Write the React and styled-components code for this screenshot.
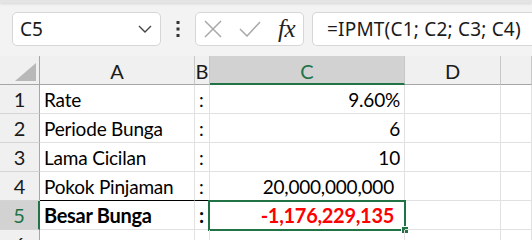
import React from "react";
import styled, { createGlobalStyle } from "styled-components";

const GREEN = "#217346";

const GlobalStyle = createGlobalStyle`
  html, body {
    margin: 0;
    padding: 0;
    background: #fff;
  }
`;

const Window = styled.div`
  width: 532px;
  height: 240px;
  overflow: hidden;
  background: #f3f3f3;
  font-family: "Lato", "Noto Sans", sans-serif;
`;

const RibbonEdge = styled.div`
  height: 3px;
  background: #e4e4e4;
  box-shadow: 0 1px 3px rgba(0, 0, 0, 0.12);
`;

const FormulaBar = styled.div`
  display: flex;
  align-items: center;
  height: 34px;
  padding: 9px 0 0 12px;
  font-family: "Noto Sans", "Open Sans", sans-serif;
`;

const Box = styled.div`
  box-sizing: border-box;
  height: 34px;
  background: #fff;
  border: 1px solid #d6d6d6;
  display: flex;
  align-items: center;
  width: ${p => p.$w || "auto"};
  flex: ${p => (p.$grow ? 1 : "none")};
  padding: ${p => p.$pad || "0"};
  border-right: ${p => (p.$open ? "none" : "1px solid #d6d6d6")};
  border-radius: ${p => (p.$open ? "5px 0 0 5px" : "5px")};
`;

const NameText = styled.span`
  flex: 1;
  font-size: 19px;
  color: #1a1a1a;
`;

const Dots = styled.div`
  width: ${p => p.$w || "34px"};
  display: flex;
  justify-content: center;
`;

const FxText = styled.span`
  font-family: "Liberation Serif", "DejaVu Serif", serif;
  font-style: italic;
  font-size: 25px;
  color: #222;
  margin-left: auto;
  letter-spacing: -0.5px;
`;

const FormulaText = styled.span`
  font-size: 19px;
  color: #1a1a1a;
  white-space: nowrap;
  letter-spacing: 0.2px;
`;

const Grid = styled.div`
  margin-top: 10px;
  display: grid;
  grid-template-columns: 40px 155px 15px 195px 96px 1fr;
  grid-auto-rows: 29px;
  background: #fff;
`;

const ColHead = styled.div`
  box-sizing: border-box;
  background: ${p => (p.$sel ? "#d2d2d2" : "#f0f0f0")};
  border-right: 1px solid ${p => (p.$sel ? "#c6c6c6" : "#c8c8c8")};
  border-bottom: ${p => (p.$sel ? `2px solid ${GREEN}` : "1px solid #a6a6a6")};
  color: ${p => (p.$sel ? GREEN : "#1a1a1a")};
  display: flex;
  align-items: center;
  justify-content: center;
  font-size: 20px;
  padding-top: 2px;
  white-space: nowrap;
`;

const Corner = styled.div`
  box-sizing: border-box;
  background: #f0f0f0;
  border-right: 1px solid #a6a6a6;
  border-bottom: 1px solid #a6a6a6;
  display: flex;
  align-items: flex-end;
  justify-content: flex-end;
  padding: 0 3px 3px 0;
`;

const RowHead = styled.div`
  box-sizing: border-box;
  background: ${p => (p.$sel ? "#d2d2d2" : "#f0f0f0")};
  border-right: ${p => (p.$sel ? `2px solid ${GREEN}` : "1px solid #a6a6a6")};
  border-bottom: 1px solid #d4d4d4;
  color: ${p => (p.$sel ? GREEN : "#1a1a1a")};
  display: flex;
  align-items: center;
  justify-content: center;
  font-size: 20px;
`;

const Cell = styled.div`
  box-sizing: border-box;
  position: relative;
  border-right: 1px solid #e1e1e1;
  border-bottom: 1px solid ${p => (p.$rule ? "#000" : "#e1e1e1")};
  display: flex;
  align-items: center;
  justify-content: ${p => (p.$right ? "flex-end" : "flex-start")};
  padding: 0 ${p => (p.$right ? p.$pr || "4px" : "0")} 0 ${p => (p.$right ? "0" : "4px")};
  font-size: ${p => (p.$bold ? "20px" : "19px")};
  letter-spacing: ${p => (p.$bold ? "-0.3px" : "-0.2px")};
  font-weight: ${p => (p.$bold ? 700 : 400)};
  color: ${p => p.$color || "#000"};
  white-space: nowrap;
`;

const Selection = styled.div`
  position: absolute;
  left: -2px;
  top: -1px;
  right: -2px;
  bottom: -2px;
  border: 2px solid ${GREEN};
  pointer-events: none;
`;

const FillHandle = styled.div`
  position: absolute;
  right: -5px;
  bottom: -5px;
  width: 6px;
  height: 6px;
  background: ${GREEN};
  border: 1px solid #fff;
`;

const rows = [
  { n: 1, a: "Rate", c: "9.60%" },
  { n: 2, a: "Periode Bunga", c: "6" },
  { n: 3, a: "Lama Cicilan", c: "10" },
  { n: 4, a: "Pokok Pinjaman", c: "20,000,000,000", rule: true, pad: "10px" },
  { n: 5, a: "Besar Bunga", c: "-1,176,229,135", bold: true, sel: true, pad: "10px" },
  { n: 6, a: "", c: "" },
];

const Chevron = () => (
  <svg width="14" height="8" viewBox="0 0 14 8" style={{ marginRight: 8 }}>
    <path d="M1 1 L7 7 L13 1" fill="none" stroke="#444" strokeWidth="1.4" />
  </svg>
);

const VDots = () => (
  <svg width="4" height="18" viewBox="0 0 4 18">
    <rect x="0.5" y="1" width="3" height="3" fill="#333" />
    <rect x="0.5" y="7.5" width="3" height="3" fill="#333" />
    <rect x="0.5" y="14" width="3" height="3" fill="#333" />
  </svg>
);

const Cross = () => (
  <svg width="18" height="18" viewBox="0 0 18 18" style={{ marginLeft: 8 }}>
    <path d="M1 1 L17 17 M17 1 L1 17" stroke="#a8a8a8" strokeWidth="1.5" />
  </svg>
);

const Check = () => (
  <svg width="22" height="16" viewBox="0 0 22 16" style={{ marginLeft: 17 }}>
    <path d="M1 8 L8 15 L21 1" fill="none" stroke="#a8a8a8" strokeWidth="1.5" />
  </svg>
);

const Triangle = () => (
  <svg width="21" height="18" viewBox="0 0 21 18">
    <polygon points="21,0 21,18 0,18" fill="#b8b8b8" />
  </svg>
);

export default function App() {
  return (
    <Window>
      <GlobalStyle />
      <RibbonEdge />
      <FormulaBar>
        <Box $w="149px" $pad="0 0 0 7px">
          <NameText>C5</NameText>
          <Chevron />
        </Box>
        <Dots>
          <VDots />
        </Dots>
        <Box $w="109px" $pad="0 8px 0 0">
          <Cross />
          <Check />
          <FxText>fx</FxText>
        </Box>
        <Dots $w="8px" />
        <Box $grow $open $pad="0 0 0 14px">
          <FormulaText>=IPMT(C1; C2; C3; C4)</FormulaText>
        </Box>
      </FormulaBar>
      <Grid>
        <Corner>
          <Triangle />
        </Corner>
        <ColHead>A</ColHead>
        <ColHead>B</ColHead>
        <ColHead $sel>C</ColHead>
        <ColHead>D</ColHead>
        <ColHead />
        {rows.map(r => (
          <React.Fragment key={r.n}>
            <RowHead $sel={r.sel}>{r.n}</RowHead>
            <Cell $bold={r.bold} $rule={r.rule}>{r.a}</Cell>
            <Cell $bold={r.bold} $rule={r.rule}>{r.a ? ":" : ""}</Cell>
            <Cell $right $pr={r.pad} $bold={r.bold} $color={r.sel ? "#ff0000" : undefined}>
              {r.c}
              {r.sel && (
                <Selection>
                  <FillHandle />
                </Selection>
              )}
            </Cell>
            <Cell />
            <Cell />
          </React.Fragment>
        ))}
      </Grid>
    </Window>
  );
}
